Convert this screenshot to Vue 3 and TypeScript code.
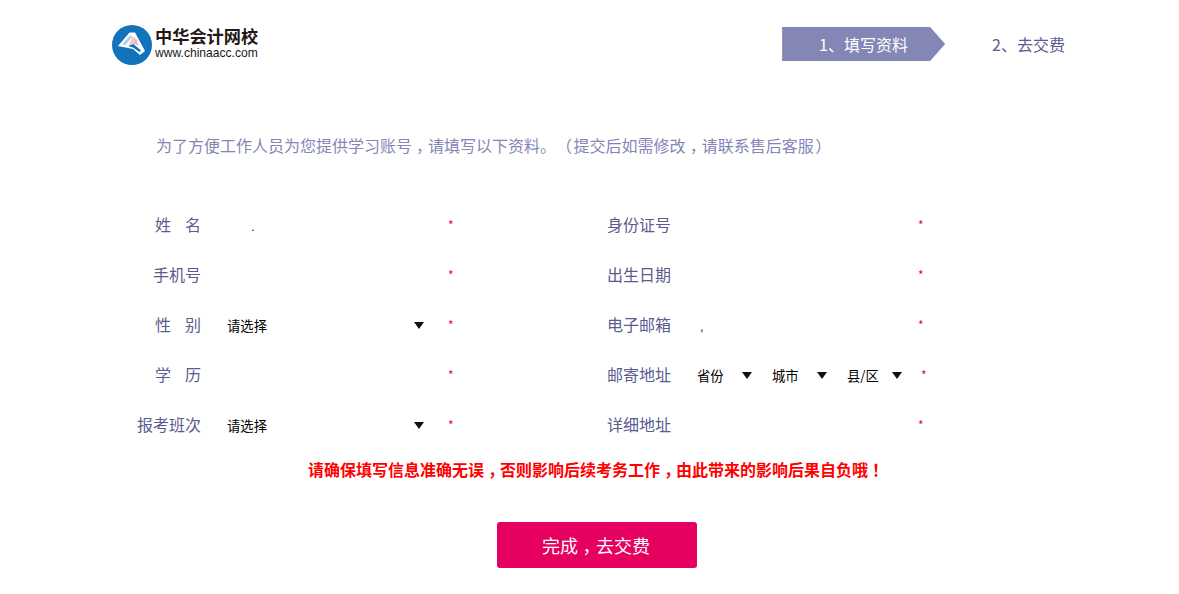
<script setup lang="ts">
import { ref } from 'vue';

const name = ref('.');
const email = ref(',');
const gender = ref('');
const course = ref('');
</script>

<template>
  <div class="page">
    <header class="header">
      <div class="logo">
        <svg class="logo-icon" viewBox="0 0 40 40" width="40" height="40">
          <circle cx="20" cy="20" r="20" fill="#1273bb" />
          <path d="M17.5 7.5 L23 7.5 L33 26 L28 30 L21 24 L6 21 Z" fill="#fff" />
          <path d="M18.5 10 L10 19.5 L13.5 20 L20 12 Z" fill="#a9d0ea" />
          <path d="M21 11 L17 19 L21 20.5 L26 16 Z" fill="#f4c9b8" />
          <path d="M23.5 14 L27 21 L22.5 18.5 Z" fill="#d9b3d4" />
          <path d="M16 21 L21.5 19 L29 25.5 L27.5 27 L21 22.5 Z" fill="#1273bb" />
        </svg>
        <div class="logo-text">
          <div class="logo-cn">中华会计网校</div>
          <div class="logo-en">www.chinaacc.com</div>
        </div>
      </div>
      <div class="steps">
        <div class="step-active">1、填写资料</div>
        <div class="step-next">2、去交费</div>
      </div>
    </header>

    <p class="intro">为了方便工作人员为您提供学习账号<span class="punct">，</span>请填写以下资料。（ 提交后如需修改<span class="punct">，</span>请联系售后客服 ）</p>

    <form class="form" @submit.prevent>
      <div class="row">
        <label class="label">姓<i class="gap"></i>名</label>
        <input v-model="name" class="input name-input" type="text" />
        <span class="star">*</span>
      </div>
      <div class="row">
        <label class="label">身份证号</label>
        <input class="input" type="text" />
        <span class="star">*</span>
      </div>
      <div class="row">
        <label class="label">手机号</label>
        <input class="input" type="text" />
        <span class="star">*</span>
      </div>
      <div class="row">
        <label class="label">出生日期</label>
        <input class="input" type="text" />
        <span class="star">*</span>
      </div>
      <div class="row">
        <label class="label">性<i class="gap"></i>别</label>
        <div class="select-wrap">
          <select v-model="gender" class="select">
            <option value="">请选择</option>
            <option value="m">男</option>
            <option value="f">女</option>
          </select>
        </div>
        <span class="star">*</span>
      </div>
      <div class="row">
        <label class="label">电子邮箱</label>
        <input v-model="email" class="input email-input" type="text" />
        <span class="star">*</span>
      </div>
      <div class="row">
        <label class="label">学<i class="gap"></i>历</label>
        <input class="input" type="text" />
        <span class="star">*</span>
      </div>
      <div class="row">
        <label class="label">邮寄地址</label>
        <div class="address">
          <div class="select-wrap small">
            <select class="select"><option>省份</option></select>
          </div>
          <div class="select-wrap small">
            <select class="select"><option>城市</option></select>
          </div>
          <div class="select-wrap small">
            <select class="select"><option>县/区</option></select>
          </div>
        </div>
        <span class="star address-star">*</span>
      </div>
      <div class="row">
        <label class="label">报考班次</label>
        <div class="select-wrap">
          <select v-model="course" class="select">
            <option value="">请选择</option>
          </select>
        </div>
        <span class="star">*</span>
      </div>
      <div class="row">
        <label class="label">详细地址</label>
        <input class="input" type="text" />
        <span class="star">*</span>
      </div>
    </form>

    <p class="warning">请确保填写信息准确无误<span class="punct">，</span>否则影响后续考务工作<span class="punct">，</span>由此带来的影响后果自负哦<span class="punct">！</span></p>

    <div class="actions">
      <button class="submit" type="button">完成<span class="punct">，</span>去交费</button>
    </div>
  </div>
</template>

<style>
html,
body {
  margin: 0;
  background: #fff;
}
</style>

<style scoped>
.page {
  width: 1179px;
  height: 594px;
  box-sizing: border-box;
  padding: 25px 0 0 112px;
  overflow: hidden;
  font-family: "Noto Sans CJK SC", "Liberation Sans", sans-serif;
  color: #5b5b8e;
  text-spacing-trim: space-all;
}
/* full-width punctuation sits in the middle of its cell in the original font */
.punct {
  padding: 0 0.25em;
  font-feature-settings: "halt";
}
.header {
  display: flex;
  justify-content: space-between;
  align-items: flex-start;
  height: 40px;
}
.logo {
  display: flex;
  gap: 3px;
}
.logo-icon {
  display: block;
}
.logo-text {
  color: #231815;
}
.logo-cn {
  font-size: 17.2px;
  font-weight: 700;
  line-height: 22px;
  white-space: nowrap;
}
.logo-en {
  font-family: "Liberation Sans", sans-serif;
  font-size: 12.1px;
  line-height: 13px;
  white-space: nowrap;
}
.steps {
  display: flex;
  align-items: center;
  height: 34px;
  margin-top: 2px;
  margin-right: 114px;
  font-size: 16px;
}
.step-active {
  box-sizing: border-box;
  width: 163px;
  height: 34px;
  line-height: 34px;
  padding-left: 37px;
  color: #fff;
  background: #8486b6;
  clip-path: polygon(0 0, 148px 0, 100% 50%, 148px 100%, 0 100%);
}
.step-next {
  margin-left: 47px;
  color: #5b5b8e;
}
.intro {
  margin: 68px 0 0 44px;
  font-size: 16px;
  line-height: 24px;
  color: #8486b6;
  white-space: nowrap;
  word-spacing: -2px;
}
.form {
  display: grid;
  grid-template-columns: 470px 470px;
  grid-auto-rows: 50px;
  margin-top: 42px;
}
.row {
  display: flex;
  align-items: center;
}
.label {
  width: 89px;
  flex: none;
  font-size: 16px;
  text-align: right;
  white-space: nowrap;
}
.gap {
  display: inline-block;
  width: 14px;
}
.input {
  box-sizing: border-box;
  width: 225px;
  height: 34px;
  margin-left: 14px;
  padding: 4px 12px 0 12px;
  border: 0;
  outline: none;
  background: transparent;
  font: 13px "Liberation Sans", sans-serif;
  color: #222;
}
.name-input {
  padding-left: 36px;
}
.email-input {
  padding-left: 15px;
}
.star {
  margin: 2px 0 0 8px;
  font-size: 12px;
  line-height: 14px;
  color: #e60060;
}
.address-star {
  margin-left: 11px;
}
.select-wrap {
  position: relative;
  width: 225px;
  height: 32px;
  margin-left: 14px;
  flex: none;
}
.select-wrap::after {
  content: "";
  position: absolute;
  right: 16px;
  top: 14px;
  border-left: 5px solid transparent;
  border-right: 5px solid transparent;
  border-top: 7px solid #111;
  pointer-events: none;
}
.select {
  box-sizing: border-box;
  width: 100%;
  height: 100%;
  padding: 2px 0 0 12px;
  border: 0;
  outline: none;
  appearance: none;
  background: transparent;
  font: 13.33px "Noto Sans CJK SC", "Liberation Sans", sans-serif;
  color: #000;
}
.address {
  display: flex;
  margin-left: 14px;
}
.select-wrap.small {
  width: 75px;
  margin-left: 0;
}
.select-wrap.small::after {
  right: 8px;
}
.warning {
  margin: 8px 0 0 196px;
  font-size: 16px;
  font-weight: 700;
  line-height: 24px;
  color: #ff0000;
  white-space: nowrap;
}
.actions {
  margin: 41px 0 0 385px;
}
.submit {
  display: block;
  width: 200px;
  height: 46px;
  padding: 0 2px 0 0;
  border: 0;
  border-radius: 3px;
  background: #e60060;
  color: #fff;
  font: 18px "Noto Sans CJK SC", "Liberation Sans", sans-serif;
  cursor: pointer;
}
</style>
